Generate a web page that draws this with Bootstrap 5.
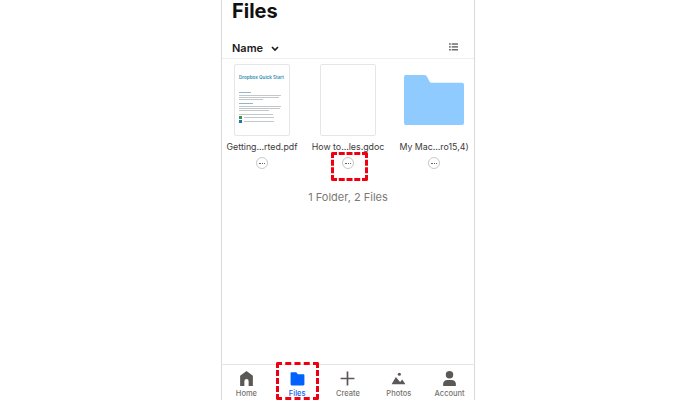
<!DOCTYPE html>
<html lang="en">
<head>
    <meta charset="UTF-8">
    <title>Files</title>
    <link href="https://cdn.jsdelivr.net/npm/bootstrap@5.3.0/dist/css/bootstrap.min.css" rel="stylesheet">
    <style>
        html, body { height: 400px; overflow: hidden; background: #fff; }
        body { font-family: Inter, "Liberation Sans", sans-serif; color: #1e1919; }
        .phone { width: 254px; height: 400px; margin-left: 221px; border-left: 1px solid #d9d9d9; border-right: 1px solid #d9d9d9; position: relative; }
        .page-title { font-size: 20px; font-weight: 700; line-height: 22px; padding: 0 0 0 10px; color: #111; height: 38px; }
        .sort-bar { height: 21px; padding: 0 16px 0 10px; border-bottom: 1px solid #eeeeee; font-size: 11px; font-weight: 600; }
        .file-grid { display: grid; grid-template-columns: repeat(3, 86px); margin: 5px 0 0 -3px; width: 258px; }
        .thumb-box { height: 72px; }
        .doc-thumb { width: 56px; height: 72px; border: 1.5px solid #e6e6e6; border-radius: 2px; padding: 10px 4px 0; background: #fff; }
        .doc-head { font-size: 4.6px; font-weight: 600; color: #2f8ab5; line-height: 5px; white-space: nowrap; }
        .file-name { font-size: 8.8px; color: #3d3a3a; line-height: 12px; margin-top: 5px; white-space: nowrap; }
        .more-btn { width: 12px; height: 12px; border: 1px solid #c9c9c9; border-radius: 50%; margin-top: 4px; }
        .more-btn i { display: block; width: 6px; border-top: 1px dotted #666; }
        .summary { font-size: 11px; color: #7b7876; margin-top: 20px; line-height: 16px; }
        .tab-bar { position: absolute; left: -1px; right: -1px; bottom: 0; height: 36px; border-top: 1px solid #e4e4e4; }
        .tab-item { flex: 1 1 0; font-size: 7.5px; font-weight: 500; color: #77736f; line-height: 9px; }
        .tab-item svg { width: 17px; height: 17px; margin: 5px 0 2px; fill: #5c5856; }
        .tab-on { color: #0f62e6; }
        .tab-on svg { fill: #0061fe; }
        .red-mark { position: absolute; border: 3px dashed #ee0011; border-radius: 2px; }
        .mark-more { left: 109px; top: 152px; width: 37px; height: 29px; }
        .mark-tab { left: 54px; top: 362px; width: 43px; height: 38px; }
    </style>
</head>
<body>
<div class="phone d-flex flex-column">
    <div class="page-title">Files</div>
    <div class="sort-bar d-flex justify-content-between align-items-start">
        <span class="d-flex align-items-center gap-2" style="line-height:21px">Name
            <svg width="8" height="6" viewBox="0 0 8 6"><path d="M1 1l3 3 3-3" fill="none" stroke="#1e1919" stroke-width="1.6"/></svg>
        </span>
        <svg class="mt-1" width="9" height="10" viewBox="0 0 10 10" fill="#55514f"><rect x="0" y="1" width="2" height="1.4"/><rect x="3" y="1" width="7" height="1.4"/><rect x="0" y="4.2" width="2" height="1.4"/><rect x="3" y="4.2" width="7" height="1.4"/><rect x="0" y="7.4" width="2" height="1.4"/><rect x="3" y="7.4" width="7" height="1.4"/></svg>
    </div>
    <div class="file-grid">
        <div class="d-flex flex-column align-items-center">
            <div class="thumb-box">
                <div class="doc-thumb">
                    <div class="doc-head">Dropbox Quick Start</div>
                    <svg class="d-block mt-2" width="46" height="36" viewBox="0 0 46 36" fill="#c4c7c9">
                        <rect x="0" y="4" width="12" height="1" fill="#8fb8cc"/><rect y="7" width="42" height="1"/><rect y="9" width="40" height="1"/><rect y="11" width="24" height="1"/>
                        <rect x="0" y="15" width="14" height="1" fill="#8fb8cc"/><rect y="18" width="42" height="1"/><rect y="20" width="41" height="1"/><rect y="22" width="30" height="1"/>
                        <rect y="26" width="34" height="1"/>
                        <rect x="0" y="28" width="3" height="3" fill="#2e9a49"/><rect x="5" y="29" width="30" height="1"/>
                        <rect x="0" y="32" width="3" height="3" fill="#2a6fb5"/><rect x="5" y="33" width="30" height="1"/>
                    </svg>
                </div>
            </div>
            <div class="file-name">Getting...rted.pdf</div>
            <div class="more-btn d-flex align-items-center justify-content-center"><i></i></div>
        </div>
        <div class="d-flex flex-column align-items-center">
            <div class="thumb-box"><div class="doc-thumb"></div></div>
            <div class="file-name">How to...les.gdoc</div>
            <div class="more-btn d-flex align-items-center justify-content-center"><i></i></div>
        </div>
        <div class="d-flex flex-column align-items-center">
            <div class="thumb-box d-flex align-items-center">
                <svg width="60" height="50" viewBox="0 0 60 50"><path d="M2 0h18c1.500 0 2.500.6 3.200 2l2.300 4.500c.4.800 1 1.200 2 1.200H58c1.200 0 2 .8 2 2V48c0 1.200-.8 2-2 2H2c-1.200 0-2-.8-2-2V2C0 .8.800 0 2 0z" fill="#90cbff"/></svg>
            </div>
            <div class="file-name">My Mac...ro15,4)</div>
            <div class="more-btn d-flex align-items-center justify-content-center"><i></i></div>
        </div>
    </div>
    <div class="summary text-center">1 Folder, 2 Files</div>

    <div class="tab-bar d-flex">
        <div class="tab-item d-flex flex-column align-items-center">
            <svg viewBox="0 0 16 16"><path d="M8 1L2 5.500V15h4v-4.500a2 2 0 0 1 4 0V15h4V5.500z"/></svg>Home
        </div>
        <div class="tab-item tab-on d-flex flex-column align-items-center">
            <svg viewBox="0 0 16 16"><path d="M2.500 2h4.300L8.300 4h5.200c.6 0 1 .4 1 1v8.500c0 .6-.4 1-1 1h-11c-.6 0-1-.4-1-1V3c0-.6.400-1 1-1z"/></svg>Files
        </div>
        <div class="tab-item d-flex flex-column align-items-center">
            <svg viewBox="0 0 16 16"><path d="M7.200 1.500h1.600v5.700h5.700v1.600H8.800v5.700H7.200V8.800H1.500V7.200h5.700z"/></svg>Create
        </div>
        <div class="tab-item d-flex flex-column align-items-center">
            <svg viewBox="0 0 16 16"><circle cx="8.800" cy="4" r="1.500"/><path d="M5.500 6.500L1.500 13.500h13L11.500 9l-2 2.200z"/></svg>Photos
        </div>
        <div class="tab-item d-flex flex-column align-items-center">
            <svg viewBox="0 0 16 16"><circle cx="8" cy="4.500" r="3.500"/><path d="M2 15v-2c0-2 2-3.500 4-3.500h4c2 0 4 1.500 4 3.500v2z"/></svg>Account
        </div>
    </div>

    <div class="red-mark mark-more"></div>
    <div class="red-mark mark-tab"></div>
</div>
</body>
</html>
